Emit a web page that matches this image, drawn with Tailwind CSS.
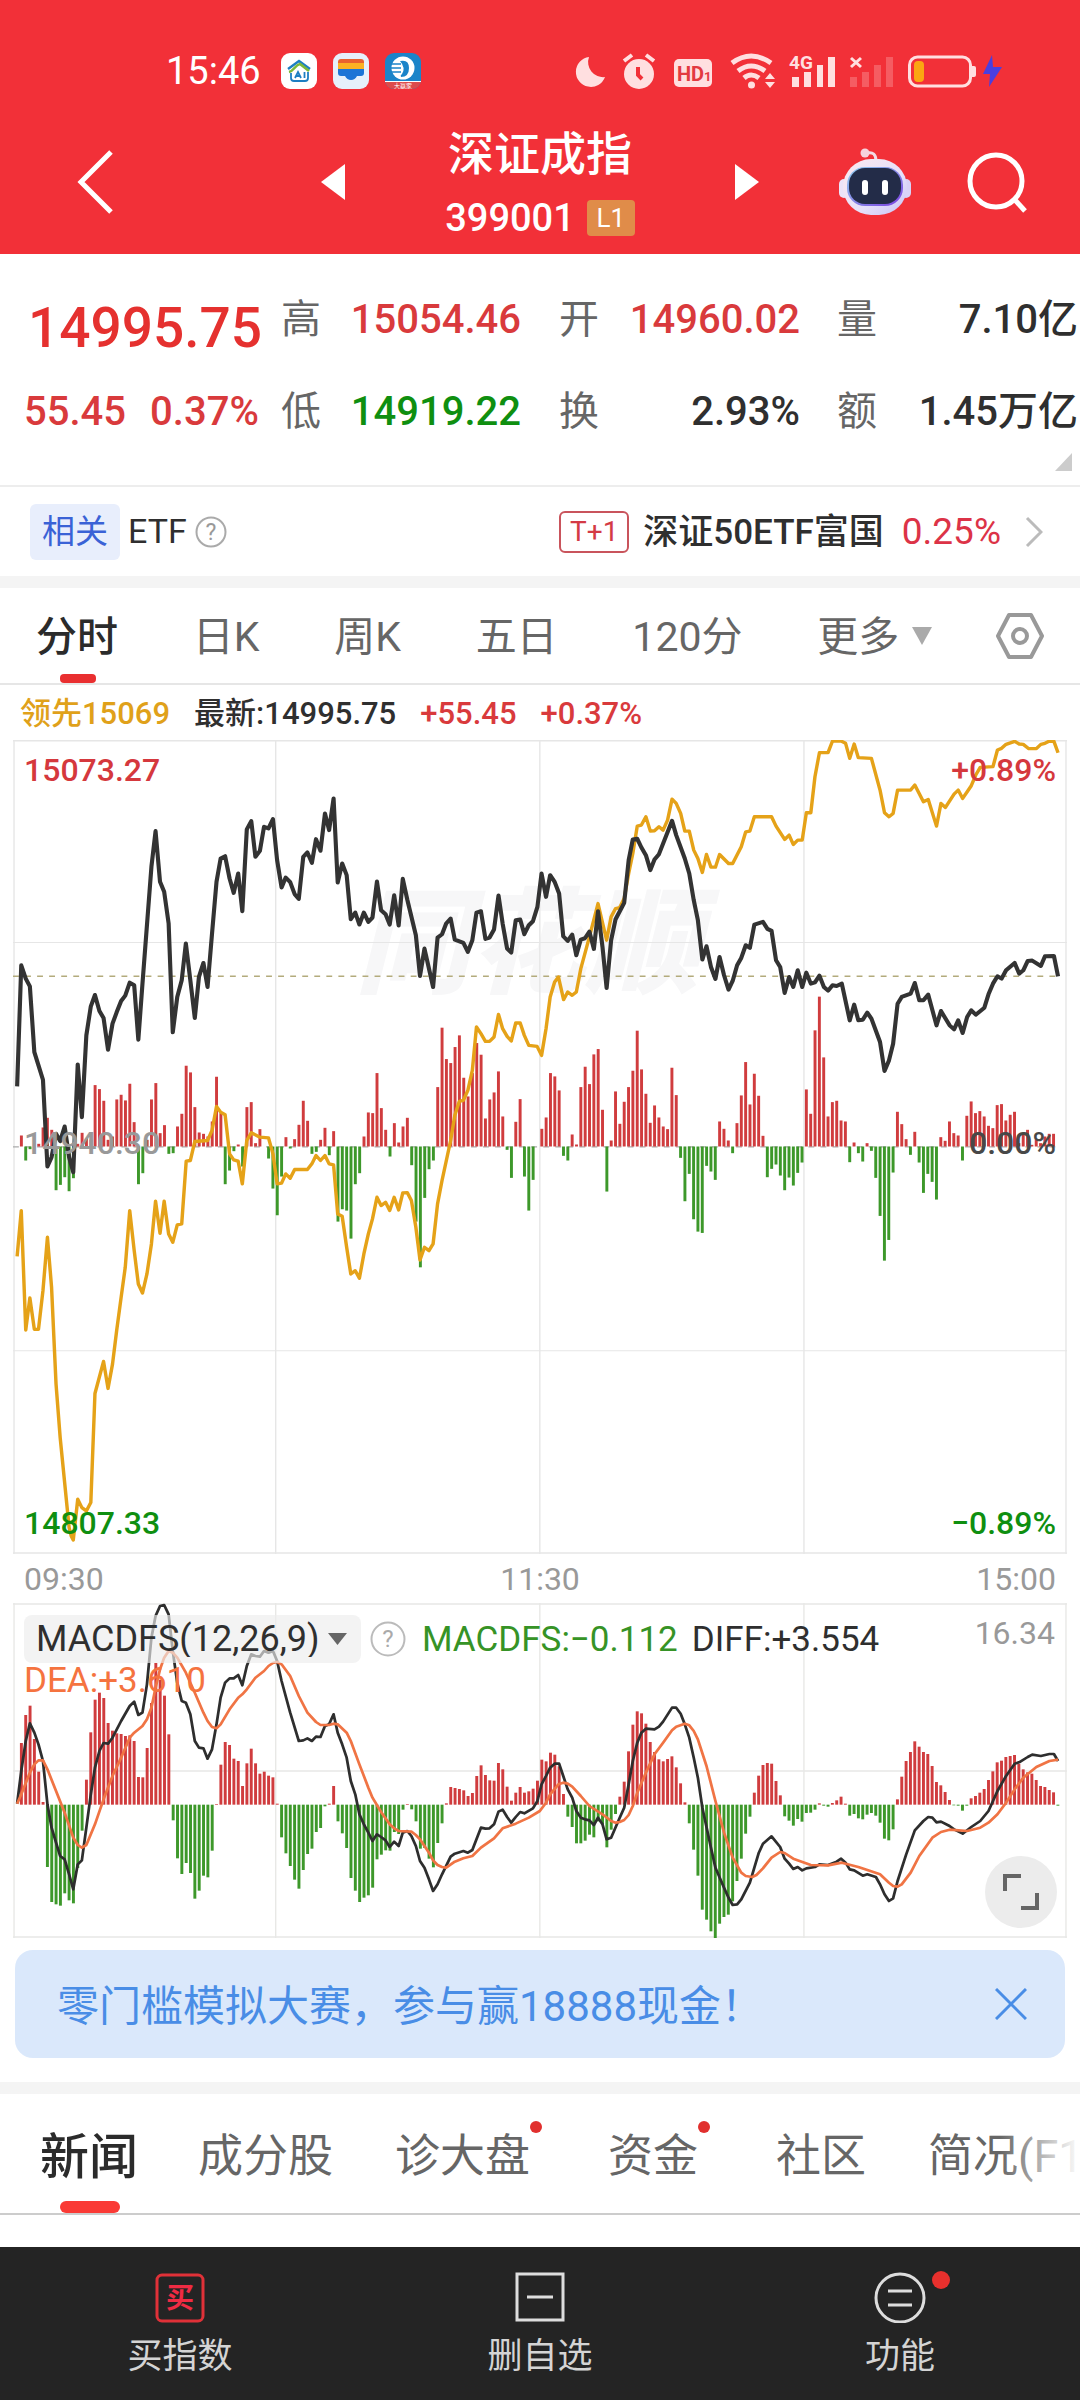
<!DOCTYPE html>
<html lang="zh-CN">
<head>
<meta charset="utf-8">
<meta name="viewport" content="width=device-width, initial-scale=1">
<title>深证成指 399001</title>
<script src="https://cdn.jsdelivr.net/npm/@tailwindcss/browser@4"></script>
</head>
<body class="flex min-h-screen flex-col bg-white font-['Roboto','Noto_Sans_CJK_SC',sans-serif] text-[#2f2f2f]">

<header class="bg-[#f23038] text-white">
  <!-- status bar -->
  <div class="flex h-[118px] items-center justify-between pt-6 pr-[78px] pl-[166px]">
    <div class="flex items-center gap-4">
      <span class="mr-1 text-[38px] leading-none">15:46</span>
      <svg class="size-9" viewBox="0 0 36 36" aria-hidden="true"><rect width="36" height="36" rx="9" fill="#fff"/><path d="M7 16 18 8l11 8" fill="none" stroke="#1d7ec2" stroke-width="2.4"/><path d="M8 19c5-1 6-7 11-8l9 7" fill="none" stroke="#7cb83a" stroke-width="2.6"/><path d="M10 20v5q0 3 3 3h11q3 0 3-3v-6" fill="none" stroke="#1d7ec2" stroke-width="1.8"/><path d="m14 25 3-6 3 6m-5-2h4M23.500 19v6" fill="none" stroke="#1d7ec2" stroke-width="1.8"/></svg>
      <svg class="size-9" viewBox="0 0 36 36" aria-hidden="true"><rect width="36" height="36" rx="9" fill="#e6f0fb"/><path d="M5 9q0-3 3-3h20q3 0 3 3v3H5z" fill="#e9622f"/><path d="M5 10h26v6H5z" fill="#fbb124"/><path d="M5 16h26v4q0 3-3 3h-4q-2 4-6 4t-6-4H8q-3 0-3-3z" fill="#1c74d6"/></svg>
      <svg class="size-9" viewBox="0 0 36 36" aria-hidden="true"><defs><clipPath id="tile"><rect width="36" height="36" rx="9"/></clipPath></defs><g clip-path="url(#tile)"><rect width="36" height="36" fill="#1b84c9"/><path d="M0 28h36v8H0z" fill="#dd4b4b"/></g><circle cx="18" cy="15" r="11.500" fill="#fff"/><path d="M15 8q9-2 9 7t-8 9q-1-2 1-3 4-6-2-13z" fill="#1b84c9"/><path d="M6 11h10M6 15h10M6 19h10" stroke="#1b84c9" stroke-width="1.500"/><path d="M0 28.500h36" stroke="#fff"/><text x="18" y="34.500" text-anchor="middle" font-size="6" fill="#fff">大赢家</text></svg>
    </div>
    <svg class="h-10 w-[428px]" viewBox="574 50 428 40" fill="#ffdfe0" aria-label="状态图标">
      <path d="M589 56a15 15 0 1 0 16 20 15 15 0 0 1-16-20z"/>
      <circle cx="639" cy="73" r="15"/><path d="m624 60 8-6M646 54l8 6" stroke="#ffdfe0" stroke-width="4"/><path d="M638 66v8l4 4" fill="none" stroke="#f23038" stroke-width="4"/>
      <rect x="674" y="58" width="38" height="28" rx="5"/><text x="677" y="80" font-size="20" font-weight="700" fill="#e33940">HD</text><text x="704" y="80" font-size="13" font-weight="700" fill="#e33940">1</text>
      <path d="M732 62q19-14 39 0M738 70q13-10 27 0M744 77q7-6 15 0" fill="none" stroke="#ffdfe0" stroke-width="5"/><circle cx="751.500" cy="84" r="3.500"/><path d="m765 78 5-6 5 6zM765 81l5 6 5-6z"/>
      <text x="789" y="68" font-size="19" font-weight="700">4G</text>
      <path d="M792 76h7v10h-7zM804 71h7v15h-7zM817 64h6v22h-6zM828 56h7v30h-7z"/>
      <path d="m851 57 10 9m0-9-10 9" stroke="#ffdfe0" stroke-width="3"/>
      <path d="M850 76h7v10h-7zM862 71h7v15h-7zM874 64h7v22h-7zM886 56h7v30h-7z" opacity=".25"/>
      <rect x="909.500" y="56" width="61" height="29" rx="8" fill="none" stroke="#ffdfe0" stroke-width="3"/><rect x="914" y="60" width="10" height="21" rx="4" fill="#fba512"/><path d="M972 65h2q2 0 2 2v7q0 2-2 2h-2z"/>
      <path d="M992 54 983 73h7l-1 13 13-20h-9z" fill="#4a3fe0"/>
    </svg>
  </div>
  <!-- title bar -->
  <div class="grid h-[136px] grid-cols-[1fr_390px_1fr] px-[52px]">
    <div class="flex items-center justify-between pb-2 pl-[25px]">
      <button type="button" aria-label="返回"><svg class="h-16 w-9" viewBox="0 0 36 64" fill="none" stroke="#fff" stroke-width="5"><path d="M34 2 4 32l30 30"/></svg></button>
      <button type="button" aria-label="上一个"><svg class="h-9 w-6" viewBox="0 0 24 36" fill="#fff"><path d="M24 0v36L0 18z"/></svg></button>
    </div>
    <div class="flex flex-col items-center pt-2">
      <h1 class="text-[46px] leading-[56px] font-medium">深证成指</h1>
      <div class="mt-3 flex items-center gap-3"><span class="text-[38px] leading-[48px] font-medium">399001</span><span class="flex h-9 w-12 items-center justify-center rounded bg-[#e08c49] text-[26px]">L1</span></div>
    </div>
    <div class="flex items-center justify-between pb-2">
      <button type="button" aria-label="下一个"><svg class="h-9 w-6" viewBox="0 0 24 36" fill="#fff"><path d="M0 0v36l24-18z"/></svg></button>
      <div class="flex items-center gap-14">
        <button type="button" aria-label="智能助手"><svg class="h-[68px] w-[72px]" viewBox="0 0 72 68">
          <defs><linearGradient id="head" x1="0" y1="0" x2="1" y2="1"><stop offset="0" stop-color="#fbe9ef"/><stop offset=".6" stop-color="#e6e0fa"/><stop offset="1" stop-color="#c9c2f5"/></linearGradient><linearGradient id="rim" x1="0" y1="0" x2="1" y2="1"><stop offset="0" stop-color="#8fd0ee"/><stop offset="1" stop-color="#7b3fe0"/></linearGradient></defs>
          <path d="M28 5q9-2 9 8" fill="none" stroke="#f3dbe6" stroke-width="3"/><circle cx="26" cy="5" r="4.500" fill="#f6d3dc"/>
          <rect y="31" width="10" height="19" rx="5" fill="#ebe3f8"/><rect x="62" y="31" width="10" height="19" rx="5" fill="#d9d2f7"/>
          <rect x="4" y="11" width="64" height="56" rx="28" fill="url(#head)"/><rect x="8" y="19" width="56" height="39" rx="18" fill="url(#rim)"/><rect x="10" y="20" width="52" height="36" rx="16" fill="#232c48"/>
          <rect x="23" y="32" width="6" height="15" rx="3" fill="#fff"/><rect x="43" y="32" width="6" height="15" rx="3" fill="#fff"/></svg></button>
        <button type="button" aria-label="搜索"><svg class="h-[61px] w-[61px]" viewBox="0 0 61 61" fill="none" stroke="#fff" stroke-width="5"><circle cx="29" cy="29" r="26"/><path d="m48 48 10 11"/></svg></button>
      </div>
    </div>
  </div>
</header>

<!-- quote summary -->
<section class="relative grid h-[231px] grid-cols-[256px_240fr_254fr_253fr] grid-rows-[84px_84px] gap-x-[25px] gap-y-2 pt-6 pr-[2px] text-[40px] font-medium">
  <div class="flex items-center pt-4 pl-7 text-[55px] text-[#e5312f]">14995.75</div>
  <div class="flex items-center justify-between"><span class="font-normal text-[#666]">高</span><span class="text-[#d93a3c]">15054.46</span></div>
  <div class="flex items-center justify-between pl-[13px]"><span class="font-normal text-[#666]">开</span><span class="text-[#d93a3c]">14960.02</span></div>
  <div class="flex items-center justify-between pl-3"><span class="font-normal text-[#666]">量</span><span>7.10亿</span></div>
  <div class="flex items-center gap-6 pl-6 text-[#d93a3c]"><span>55.45</span><span>0.37%</span></div>
  <div class="flex items-center justify-between"><span class="font-normal text-[#666]">低</span><span class="text-[#0f8f10]">14919.22</span></div>
  <div class="flex items-center justify-between pl-[13px]"><span class="font-normal text-[#666]">换</span><span>2.93%</span></div>
  <div class="flex items-center justify-between pl-3"><span class="font-normal text-[#666]">额</span><span>1.45万亿</span></div>
  <svg class="absolute right-2 bottom-[14px] h-[18px] w-[17px]" viewBox="0 0 17 18" fill="#ccc" aria-hidden="true"><path d="M17 0v18H0z"/></svg>
</section>

<!-- related ETF -->
<section class="flex h-[103px] items-center justify-between border-t-2 border-b-12 border-t-[#ededed] border-b-[#f4f4f4] pr-[37px] pl-[30px]">
  <div class="flex items-center gap-2 text-[34px]">
    <span class="flex h-14 items-center rounded-md bg-[#e8eefc] px-3 text-[33px] text-[#3a62d6]">相关</span><span>ETF</span>
    <button type="button" aria-label="说明"><svg class="size-8" viewBox="0 0 32 32"><circle cx="16" cy="16" r="14.500" fill="none" stroke="#aaa" stroke-width="2"/><text x="16" y="24" text-anchor="middle" font-size="23" fill="#999">?</text></svg></button>
  </div>
  <a href="#etf" class="flex items-center text-[35px]">
    <span class="mr-[14px] flex h-[42px] w-[70px] items-center justify-center rounded-md border-2 border-[#c9545c] text-[28px] text-[#d43a45]">T+1</span>
    <span class="mr-[18px] pt-1 font-medium">深证50ETF富国</span><span class="mr-6 text-[37px] text-[#dc3347]">0.25%</span>
    <svg class="h-8 w-[18px]" viewBox="0 0 18 32" fill="none" stroke="#bbb" stroke-width="3" aria-hidden="true"><path d="m2 2 14 14L2 30"/></svg>
  </a>
</section>

<!-- period tabs -->
<nav class="flex h-[97px] items-center justify-between border-b-2 border-[#e6e6e6] pr-9 pl-9 text-[41px] text-[#666]" aria-label="周期">
  <button type="button" class="relative flex h-full items-center pt-1 font-medium text-[#2b2b2b]">分时<span class="absolute bottom-0 left-6 h-[9px] w-9 rounded bg-[#e92f30]"></span></button>
  <button type="button" class="pt-1">日K</button>
  <button type="button" class="pt-1">周K</button>
  <button type="button" class="pt-1">五日</button>
  <button type="button" class="pt-1">120分</button>
  <label class="flex items-center gap-3"><select class="w-[82px] appearance-none bg-transparent pt-1" aria-label="更多周期"><option>更多</option></select><svg class="h-5 w-[22px]" viewBox="0 0 22 20" fill="#aaa" aria-hidden="true"><path d="M1 1h20L11 19z"/></svg></label>
  <button type="button" class="-ml-3" aria-label="设置"><svg class="h-[46px] w-12" viewBox="0 0 48 46" fill="none" stroke="#999" stroke-width="4" stroke-linejoin="round"><path d="M13 2h22l11 21-11 21H13L2 23z"/><circle cx="24" cy="23" r="7"/></svg></button>
</nav>

<div class="flex h-[55px] items-center gap-6 pt-1 pl-5 text-[31px] font-medium">
  <span class="text-[#e0a11a]">领先15069</span><span>最新:14995.75</span><span class="text-[#d93a3c]">+55.45</span><span class="text-[#d93a3c]">+0.37%</span>
</div>

<!-- intraday chart -->
<section class="relative mx-[13px] h-[814px] text-[32px] leading-10 font-medium" aria-label="分时图">
  <div class="absolute top-[135px] left-[342px] text-[115px] leading-[140px] font-black text-[#f7f7f8] italic" aria-hidden="true">同花顺</div>
  <svg class="absolute inset-0 size-full" viewBox="38 60 3061 2439" preserveAspectRatio="none" fill="none" aria-hidden="true">
    <g stroke="#e6e6e6" stroke-width="5"><path d="M38 62H3099M38 2496H3099"/><path d="M41 60V2499M801 60V2499M1568 60V2499M2335 60V2499M3096 60V2499" stroke-width="4"/><path d="M38 667H3099M38 1890H3099" stroke-width="3"/></g>
    <path d="M38 768H3080" stroke="#b3ab7c" stroke-width="4" stroke-dasharray="17 18"/>
    <path d="M38 1279H3080" stroke="#aaa" stroke-width="4" stroke-dasharray="17 18"/>
    <g id="volume"></g>
    <polyline stroke="#e5a218" stroke-width="10" stroke-linejoin="round" points="50,1607 62,1470 75,1828 87,1732 100,1826 112,1826 125,1710 138,1550 150,1700 163,1990 175,2150 201,2420 207,2445 213,2457 226,2335 238,2360 251,2370 264,2345 276,2018 301,1922 314,2003 327,1930 339,1830 352,1730 364,1640 377,1470 390,1590 402,1690 414,1717 427,1660 440,1570 452,1442 465,1538 477,1442 490,1540 502,1565 515,1513 528,1510 541,1322 553,1320 566,1263 603,1260 616,1230 629,1158 641,1175 654,1183 667,1300 679,1318 692,1322 704,1390 717,1260 730,1237 755,1250 780,1252 793,1300 805,1390 818,1388 830,1360 843,1373 856,1347 893,1347 906,1330 918,1305 931,1320 944,1305 956,1330 969,1333 981,1480 994,1487 1007,1580 1019,1660 1032,1650 1044,1673 1057,1600 1070,1540 1082,1495 1095,1430 1107,1455 1120,1445 1132,1470 1145,1430 1158,1468 1170,1417 1183,1416 1195,1440 1208,1520 1220,1618 1233,1580 1246,1590 1258,1570 1271,1450 1284,1380 1309,1260 1321,1185 1334,1143 1346,1140 1359,1110 1372,1050 1384,920 1397,940 1410,963 1422,963 1435,950 1448,882 1460,925 1473,948 1485,962 1498,908 1511,908 1523,945 1536,975 1560,978 1573,1005 1586,925 1598,830 1611,785 1622,770 1637,838 1649,815 1662,825 1674,815 1687,745 1712,650 1737,550 1762,660 1775,590 1788,565 1800,562 1813,535 1826,460 1838,400 1851,318 1863,315 1876,290 1889,333 1901,332 1914,320 1926,330 1939,300 1952,237 1964,250 1977,280 1989,333 2002,333 2015,390 2027,415 2040,457 2052,403 2065,441 2078,441 2090,403 2116,430 2128,430 2153,380 2166,335 2178,333 2191,290 2241,290 2254,318 2279,358 2292,345 2304,373 2317,360 2330,360 2342,278 2355,278 2367,170 2380,98 2405,98 2418,63 2443,63 2456,70 2468,115 2481,72 2493,113 2531,115 2556,210 2569,278 2582,290 2594,280 2607,210 2645,210 2657,195 2682,245 2696,238 2720,318 2733,250 2746,262 2771,222 2783,210 2796,235 2821,197 2834,165 2847,142 2884,140 2897,90 2909,85 2922,73 2947,64 2960,72 2972,73 2988,86 3010,86 3023,73 3035,70 3048,63 3061,64 3073,98"/>
    <polyline stroke="#333" stroke-width="12" stroke-linejoin="round" points="50,1098 62,735 75,775 87,798 100,995 112,1035 125,1078 138,1338 150,1310 163,1240 175,1262 188,1218 201,1310 213,1355 226,1032 238,1190 251,945 264,858 276,824 289,872 301,893 314,988 327,910 339,876 352,842 364,826 377,787 390,795 402,958 414,790 440,440 452,333 465,485 477,515 490,610 502,936 515,830 528,780 540,670 553,780 566,893 578,770 591,728 603,800 616,640 629,485 641,415 654,408 667,475 679,518 692,460 704,573 717,328 730,303 742,410 755,392 767,320 780,325 793,297 805,420 818,502 830,472 843,486 856,522 868,536 881,410 893,397 906,428 918,357 931,392 944,280 956,330 969,235 981,487 994,430 1007,465 1019,597 1032,577 1044,613 1057,577 1070,605 1082,592 1095,484 1107,570 1120,582 1132,613 1145,525 1158,616 1170,476 1183,538 1208,645 1220,767 1233,685 1258,800 1271,652 1284,642 1296,610 1309,595 1321,658 1346,668 1359,695 1372,660 1384,577 1397,573 1410,656 1422,652 1435,628 1448,526 1460,610 1473,685 1485,697 1498,600 1511,598 1523,642 1536,615 1548,603 1561,560 1573,460 1586,530 1598,465 1611,485 1624,520 1636,648 1649,662 1662,643 1674,705 1687,658 1699,654 1712,634 1725,686 1737,573 1750,680 1762,803 1775,660 1788,597 1813,548 1826,420 1838,358 1851,356 1863,382 1876,405 1889,450 1901,418 1914,402 1952,302 1964,345 1989,415 2002,460 2015,540 2027,600 2040,718 2052,678 2065,740 2078,776 2090,710 2103,765 2116,808 2128,782 2141,735 2153,713 2166,675 2178,683 2191,613 2216,605 2229,626 2241,632 2254,720 2266,740 2279,818 2292,770 2304,800 2317,750 2330,800 2342,757 2355,790 2367,786 2380,766 2393,800 2405,811 2418,795 2430,797 2445,790 2468,900 2481,853 2493,900 2506,898 2519,877 2531,895 2556,965 2569,1052 2582,1020 2594,970 2607,850 2619,830 2645,820 2657,788 2670,840 2682,840 2696,823 2720,915 2733,872 2758,915 2771,927 2783,900 2796,938 2809,890 2821,870 2834,883 2859,862 2871,822 2884,790 2897,768 2909,775 2922,750 2947,728 2960,760 2972,750 2985,722 2998,721 3023,737 3035,708 3061,707 3073,768"/>
  </svg>
  <div class="relative flex h-full flex-col justify-between px-[11px] pt-[10px] pb-[11px]">
    <div class="flex justify-between text-[#d5383d]"><span>15073.27</span><span>+0.89%</span></div>
    <div class="flex justify-between pb-2 text-[#999]"><span>14940.30</span><span class="text-[#484848]">0.00%</span></div>
    <div class="flex justify-between text-[#0f8f10]"><span>14807.33</span><span>−0.89%</span></div>
  </div>
</section>
<div class="grid h-[49px] grid-cols-3 items-center px-6 text-[32px] text-[#999]"><span>09:30</span><span class="text-center">11:30</span><span class="text-right">15:00</span></div>

<!-- MACD chart -->
<section class="relative mx-[13px] h-[335px]" aria-label="MACDFS">
  <svg class="absolute inset-0 size-full" viewBox="38 36 3061 1005" preserveAspectRatio="none" fill="none" aria-hidden="true">
    <g stroke="#e8e8e6" stroke-width="5"><path d="M38 39H3099M38 1038H3099M38 540H3099"/><path d="M41 36V1041M801 36V1041M1568 36V1041M2335 36V1041M3096 36V1041" stroke-width="4"/></g>
    <g id="macd"></g>
    <polyline stroke="#2e2e2e" stroke-width="8" stroke-linejoin="round" points="50,638 62,540 75,450 87,397 100,425 112,460 125,510 138,640 150,710 163,755 175,795 188,805 201,850 213,895 226,820 238,808 251,710 264,610 276,530 289,480 301,456 314,458 327,440 352,390 377,345 390,332 402,372 414,365 427,280 440,140 452,75 465,45 477,42 490,70 502,180 515,275 528,330 540,335 553,370 566,450 578,470 591,472 603,503 616,475 629,400 641,320 654,275 667,262 679,262 692,252 704,283 717,225 730,190 742,195 755,197 767,180 780,185 793,180 805,210 818,270 843,365 868,450 881,448 893,442 906,450 918,437 931,438 944,405 956,400 969,370 981,425 994,460 1007,500 1019,570 1032,610 1044,670 1057,700 1070,725 1082,750 1095,730 1107,738 1120,748 1132,768 1145,752 1158,765 1170,725 1183,720 1195,735 1208,765 1220,810 1233,830 1246,865 1258,900 1271,880 1284,850 1309,797 1321,788 1346,780 1359,785 1372,777 1384,745 1397,710 1410,713 1422,712 1435,700 1448,662 1460,656 1473,678 1485,695 1498,678 1511,663 1523,667 1548,652 1561,630 1573,580 1586,555 1598,530 1611,518 1624,518 1636,555 1649,595 1662,620 1674,660 1687,680 1699,685 1712,688 1725,702 1737,680 1750,700 1762,745 1775,740 1800,680 1813,650 1826,580 1838,510 1851,455 1863,425 1876,413 1901,415 1914,407 1926,392 1952,350 1964,350 1977,368 1989,400 2002,440 2015,500 2027,560 2040,650 2065,770 2078,830 2103,890 2116,920 2128,942 2141,940 2153,925 2178,875 2191,830 2204,785 2216,758 2241,736 2266,768 2279,803 2292,818 2304,834 2317,828 2330,838 2342,832 2367,828 2380,820 2405,822 2430,812 2443,803 2456,815 2468,835 2481,838 2506,854 2519,850 2544,858 2556,880 2569,910 2582,930 2594,922 2607,870 2632,790 2657,718 2682,690 2696,678 2708,680 2720,694 2733,692 2758,705 2771,715 2796,728 2821,708 2847,690 2871,660 2897,600 2922,555 2947,518 2960,514 2985,498 2998,491 3023,495 3048,489 3061,489 3073,510"/>
    <polyline stroke="#f07444" stroke-width="8" stroke-linejoin="round" points="50,638 62,610 87,545 100,520 112,508 125,508 138,535 163,600 188,665 213,740 226,762 238,770 251,762 276,700 301,625 327,555 352,500 377,440 390,425 414,405 427,385 440,350 452,290 465,235 477,200 490,180 502,185 515,200 540,245 566,305 591,365 603,390 616,408 629,412 641,400 667,355 692,320 704,310 717,295 742,260 767,240 780,225 793,216 805,213 818,220 843,255 868,315 893,365 918,393 931,402 956,402 969,398 981,400 1007,425 1019,450 1044,520 1070,590 1082,620 1107,663 1132,700 1145,712 1158,720 1195,722 1208,732 1220,745 1246,785 1258,808 1271,822 1284,828 1296,830 1321,812 1346,802 1372,795 1397,770 1435,742 1460,712 1498,698 1536,680 1568,660 1586,635 1598,610 1622,580 1636,575 1649,578 1662,587 1687,615 1712,645 1750,670 1775,690 1788,695 1800,693 1813,687 1826,672 1838,645 1851,605 1876,545 1901,490 1926,455 1952,418 1964,407 1989,398 2002,403 2015,420 2027,445 2052,525 2078,630 2103,725 2128,800 2153,845 2166,855 2185,858 2197,852 2216,832 2241,800 2266,783 2279,786 2304,803 2355,822 2405,823 2445,815 2493,828 2556,850 2582,875 2594,885 2607,887 2619,880 2645,845 2670,795 2708,740 2733,723 2758,716 2809,720 2847,710 2871,695 2897,670 2922,635 2947,595 2972,560 3010,528 3048,510 3073,506"/>
  </svg>
  <div class="relative flex items-start justify-between pt-3 pr-3 pl-[11px]">
    <div>
      <div class="flex h-12 items-center text-[35px] leading-none">
        <label class="flex h-12 items-center rounded-lg bg-[#ececec]/65 pr-[14px] pl-3"><select class="w-[292px] appearance-none bg-transparent text-[36px]" aria-label="指标"><option>MACDFS(12,26,9)</option></select><svg class="h-3 w-[19px]" viewBox="0 0 19 12" fill="#666" aria-hidden="true"><path d="M0 0h19l-9.500 12z"/></svg></label>
        <button type="button" class="mr-4 ml-[9px]" aria-label="指标说明"><svg class="size-9" viewBox="0 0 36 36"><circle cx="18" cy="18" r="16.500" fill="none" stroke="#bbb" stroke-width="2"/><text x="18" y="26" text-anchor="middle" font-size="24" fill="#aaa">?</text></svg></button>
        <span class="text-[#369326]">MACDFS:−0.112</span><span class="ml-[14px]">DIFF:+3.554</span>
      </div>
      <div class="text-[35px] leading-9 text-[#f5733f]">DEA:+3.610</div>
    </div>
    <span class="text-[32px] leading-9 text-[#999]">16.34</span>
  </div>
  <button type="button" class="absolute right-[10px] bottom-[10px] flex size-[72px] items-center justify-center rounded-full bg-[#ececec]" aria-label="全屏"><svg class="size-10" viewBox="0 0 40 40" fill="none" stroke="#666" stroke-width="4"><path d="M4 19V4h16M36 21v15H20"/></svg></button>
</section>

<!-- promotion -->
<div class="mx-[15px] mt-3 flex h-[108px] items-center justify-between rounded-[18px] bg-[#dae8fb] pr-[38px] pl-[42px] text-[42px] text-[#498de6]">
  <a href="#contest" class="pt-1">零门槛模拟大赛，参与赢18888现金！</a>
  <button type="button" aria-label="关闭"><svg class="size-8" viewBox="0 0 32 32" fill="none" stroke="#498de6" stroke-width="3"><path d="m1 1 30 30M31 1 1 31"/></svg></button>
</div>

<!-- content tabs -->
<nav class="relative mt-6 flex h-[133px] items-center gap-[62px] overflow-hidden border-t-12 border-b-2 border-t-[#f4f4f4] border-b-[#ccc] pl-10 text-[45px] whitespace-nowrap text-[#666]" aria-label="资讯">
  <a href="#news" class="relative flex h-full items-center pt-2 text-[49px] font-medium text-[#2b2b2b]">新闻<span class="absolute bottom-0 left-5 h-3 w-[60px] rounded-md bg-[#fa3a35]"></span></a>
  <a href="#stocks" class="-ml-0.5 pt-1.5">成分股</a>
  <a href="#market" class="relative pt-1.5">诊大盘<span class="absolute top-1 -right-3 size-3 rounded-full bg-[#e1302e]"></span></a>
  <a href="#funds" class="relative ml-4 pt-1.5">资金<span class="absolute top-1 -right-3 size-3 rounded-full bg-[#e1302e]"></span></a>
  <a href="#club" class="ml-4 pt-1.5">社区</a>
  <a href="#brief" class="pt-1.5">简况(F10)</a>
  <span class="pointer-events-none absolute inset-y-0 right-0 w-20 bg-linear-to-r from-white/0 to-white"></span>
</nav>

<!-- bottom actions -->
<footer class="mt-auto grid h-[153px] grid-cols-3 bg-[#242424] text-[35px] text-[#d4d4d4]">
  <button type="button" class="flex flex-col items-center pt-6"><svg class="h-[52px] w-[52px]" viewBox="0 0 52 52" aria-hidden="true"><rect x="3" y="4" width="46" height="46" rx="5" fill="none" stroke="#e03138" stroke-width="3"/><text x="26" y="37" text-anchor="middle" font-size="28" font-weight="700" fill="#f02b43">买</text></svg><span class="mt-[10px] leading-[48px]">买指数</span></button>
  <button type="button" class="flex flex-col items-center pt-6"><svg class="h-[52px] w-[52px]" viewBox="0 0 52 52" fill="none" stroke="#ddd" stroke-width="3" aria-hidden="true"><path d="M3 3h46v46H3zM13 26h26"/></svg><span class="mt-[10px] leading-[48px]">删自选</span></button>
  <button type="button" class="flex flex-col items-center pt-6"><span class="relative"><svg class="h-[52px] w-[52px]" viewBox="0 0 52 52" fill="none" stroke="#ddd" stroke-width="3" aria-hidden="true"><circle cx="26" cy="27" r="24"/><path d="M14 20h24M14 34h24"/></svg><span class="absolute top-0 -right-6 size-[18px] rounded-full bg-[#e8302d]"></span></span><span class="mt-[10px] leading-[48px]">功能</span></button>
</footer>

<script>
  // One value per trading minute, 09:30 to 15:00; the sign gives the side of the zero line.
  const volume = [0,33,-42,-8,0,8,57,86,50,-131,-115,-92,-134,-95,8,41,25,20,184,172,137,20,30,141,155,138,188,73,-113,-80,20,141,190,40,64,-22,-20,60,98,242,222,118,42,38,30,75,209,100,-113,-72,-14,6,-60,118,133,10,52,0,-36,-126,-206,-90,28,-6,22,65,137,77,-22,-16,20,56,-26,46,-225,-188,-192,-276,-113,-80,30,102,100,220,115,50,-30,70,12,60,86,-56,-225,-362,-154,-68,-42,178,356,262,250,298,333,206,150,220,310,275,84,141,162,225,90,-10,-94,74,142,-90,-192,-100,0,53,87,220,210,168,-28,-42,36,6,178,239,187,276,292,110,-135,18,165,68,134,178,227,347,231,158,71,123,87,60,52,236,154,-34,-164,-82,-218,-255,-259,-58,-75,-100,75,53,18,-20,70,153,253,126,218,152,32,-92,-67,-54,-87,-131,-93,-117,-79,-48,171,98,348,449,267,90,133,137,78,75,-47,12,-20,-45,10,-13,-94,-208,-342,-280,-78,104,67,22,-25,44,-48,-139,-82,-106,-159,28,17,75,40,33,-42,92,135,100,106,90,62,55,124,127,78,95,104,10,40,50,5,20,10,30,38,38,0];
  const macd = [0,185,269,297,197,99,8,-187,-292,-299,-303,-266,-287,-296,-190,-78,75,217,315,336,320,245,222,214,212,206,208,191,83,82,170,305,425,375,327,211,-47,-161,-208,-175,-205,-282,-258,-213,-218,-138,2,120,188,179,138,131,56,124,168,124,93,99,87,82,3,-98,-146,-184,-225,-252,-196,-148,-132,-82,-70,-5,3,56,-50,-86,-130,-220,-258,-292,-279,-272,-249,-164,-150,-137,-138,-82,-88,-15,2,-14,-50,-132,-130,-162,-188,-115,-56,4,53,50,47,43,26,35,86,118,89,73,72,125,106,54,12,36,53,36,40,48,72,135,130,156,150,115,32,-36,-67,-116,-116,-108,-90,-98,-50,-60,-128,-75,-28,24,69,160,240,280,274,243,188,158,136,130,137,145,112,64,7,-56,-135,-213,-315,-345,-380,-400,-357,-337,-330,-290,-229,-162,-87,-36,36,87,119,125,123,71,28,-35,-48,-63,-43,-51,-25,-24,-15,4,-3,-6,5,13,24,3,-33,-28,-41,-44,-30,-25,-33,-54,-102,-107,-74,16,84,131,158,190,174,158,152,116,68,58,38,14,-2,-3,-18,-3,19,26,36,47,74,100,127,132,143,146,149,122,106,97,93,74,56,53,44,37,-3];
  function drawBars(id, values, zero) {
    const group = document.getElementById(id);
    values.forEach((v, i) => {
      if (!v) return;
      const bar = document.createElementNS('http://www.w3.org/2000/svg', 'rect');
      bar.setAttribute('x', 45.5 + i * 12.595);
      bar.setAttribute('y', v > 0 ? zero - v : zero);
      bar.setAttribute('width', 8.5);
      bar.setAttribute('height', Math.abs(v));
      bar.setAttribute('fill', v > 0 ? '#d03c3e' : '#3d982a');
      group.appendChild(bar);
    });
  }
  drawBars('volume', volume, 1278);
  drawBars('macd', macd, 641);
</script>
</body>
</html>
